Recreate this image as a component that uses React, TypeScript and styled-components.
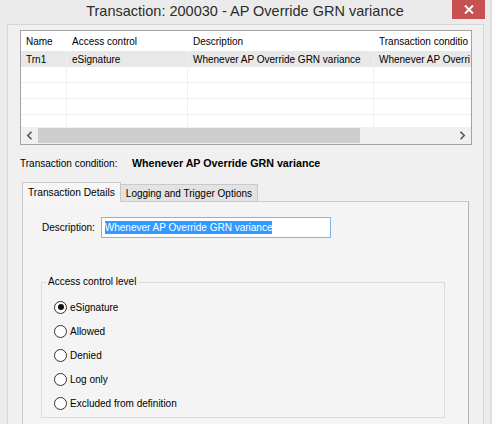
import React, { FC } from 'react';
import styled, { createGlobalStyle } from 'styled-components';

const GlobalStyle = createGlobalStyle`
  html, body {
    margin: 0;
    padding: 0;
    background: #ebebeb;
    overflow: hidden;
  }
  body {
    font-family: "Liberation Sans", Arial, sans-serif;
    font-size: 10px;
    color: #000;
  }
`;

const Window = styled.div`
  width: 492px;
  height: 424px;
  display: flex;
  flex-direction: column;
  background: #ebebeb;
  border-right: 2px solid #e0e0e0;
  box-sizing: border-box;
  overflow: hidden;
`;

const TitleBar = styled.div`
  height: 24px;
  flex: none;
  display: grid;
  grid-template-columns: 1fr auto 1fr;
  align-items: start;
`;

const Title = styled.div`
  grid-column: 2;
  font-size: 14.5px;
  line-height: 23px;
  color: #2b2b2b;
  white-space: nowrap;
`;

const CloseButton = styled.div`
  grid-column: 3;
  justify-self: end;
  margin-right: 5px;
  width: 33px;
  height: 19px;
  background: #c75050;
  display: flex;
  align-items: center;
  justify-content: center;
`;

const ClientArea = styled.div`
  flex: 1;
  margin: 0 6px 0 7px;
  border: 1px solid #d6d6d6;
  border-bottom: none;
  background: #f0f0f0;
  padding: 5px 11px 0 12px;
  display: flex;
  flex-direction: column;
  min-height: 0;
`;

const ListView = styled.div`
  height: 115px;
  box-sizing: border-box;
  border: 1px solid #a3a3a3;
  background: #fff;
  display: flex;
  flex-direction: column;
  overflow: hidden;
`;

const Rows = styled.div`
  flex: 1;
  overflow: hidden;
`;

const Row = styled.div<{ $header?: boolean; $selected?: boolean }>`
  display: grid;
  grid-template-columns: 46px 121px 186px 1fr;
  height: ${({ $header }) => ($header ? '20px' : '16px')};
  background: ${({ $selected }) => ($selected ? '#e8e8e8' : '#fff')};
  border-bottom: ${({ $header, $selected }) => ($header || $selected ? 'none' : '1px solid #f0f0f0')};
  box-sizing: border-box;
`;

const Cell = styled.div<{ $lined?: boolean }>`
  padding-left: 5px;
  display: flex;
  align-items: center;
  white-space: nowrap;
  overflow: hidden;
  border-right: ${({ $lined }) => ($lined ? '1px solid #f0f0f0' : 'none')};
`;

const HScroll = styled.div`
  height: 17px;
  flex: none;
  display: flex;
  background: #e8e8e8;
`;

const ScrollArrow = styled.div`
  width: 17px;
  display: flex;
  align-items: center;
  justify-content: center;
  background: #f0f0f0;
`;

const ScrollTrack = styled.div`
  flex: 1;
  display: flex;
  background: #f0f0f0;
  padding: 1px 0;
`;

const ScrollThumb = styled.div`
  background: #cdcdcd;
`;

const ConditionLine = styled.div`
  margin-top: 12px;
  display: flex;
  align-items: center;
  height: 12px;
`;

const ConditionLabel = styled.span`
  width: 112px;
`;

const ConditionValue = styled.span`
  font-weight: bold;
  font-size: 10.7px;
`;

const TabStrip = styled.div`
  margin-top: 13px;
  margin-left: 2px;
  display: flex;
  align-items: flex-end;
  height: 20px;
  position: relative;
  z-index: 1;
  margin-bottom: -1px;
`;

const Tab = styled.div<{ $active?: boolean }>`
  height: ${({ $active }) => ($active ? '20px' : '18px')};
  box-sizing: border-box;
  padding: 0 5px;
  display: flex;
  align-items: center;
  border: 1px solid #c9c9c9;
  border-bottom: ${({ $active }) => ($active ? 'none' : '1px solid #c9c9c9')};
  border-left: ${({ $active }) => ($active ? '1px solid #c9c9c9' : 'none')};
  background: ${({ $active }) => ($active ? '#f6f6f6' : '#e3e3e3')};
  font-size: ${({ $active }) => ($active ? '10.2px' : '10px')};
`;

const TabPanel = styled.div`
  flex: 1;
  margin-left: 2px;
  margin-right: 3px;
  border: 1px solid #c9c9c9;
  border-right-color: #b4b4b4;
  border-bottom: none;
  background: #f4f4f4;
  padding: 15px 0 0 18px;
`;

const FieldRow = styled.div`
  display: flex;
  align-items: center;
  gap: 6px;
`;

const FieldLabel = styled.span`
  padding-left: 1px;
`;

const TextInput = styled.div`
  width: 230px;
  height: 21px;
  box-sizing: border-box;
  border: 1px solid #7eb4ea;
  background: #fff;
  display: flex;
  align-items: center;
  padding-left: 3px;
`;

const Selection = styled.span`
  background: #3399ff;
  color: #fff;
  line-height: 13px;
`;

const GroupBox = styled.fieldset`
  margin: 38px 0 0 0;
  width: 404px;
  box-sizing: border-box;
  border: 1px solid #dcdcdc;
  padding: 7px 0 2px 12px;
`;

const Legend = styled.legend`
  padding: 0 2px;
  margin-left: -8px;
  line-height: 12px;
`;

const RadioRow = styled.label`
  height: 24px;
  display: flex;
  align-items: center;
  gap: 3px;
`;

const RadioCircle = styled.span<{ $checked?: boolean }>`
  width: 13px;
  height: 13px;
  box-sizing: border-box;
  border-radius: 50%;
  border: 1px solid #333;
  background: #fff;
  display: flex;
  align-items: center;
  justify-content: center;
  &::after {
    content: '';
    width: 6px;
    height: 6px;
    border-radius: 50%;
    background: ${({ $checked }) => ($checked ? '#111' : 'transparent')};
  }
`;

const Chevron: FC<{ dir: 'left' | 'right' }> = ({ dir }) => (
  <svg width="7" height="9" viewBox="0 0 7 9">
    <path
      d={dir === 'left' ? 'M5.5 0.8 L1.8 4.5 L5.5 8.2' : 'M1.5 0.8 L5.2 4.5 L1.5 8.2'}
      fill="none"
      stroke="#555"
      strokeWidth="1.6"
    />
  </svg>
);

const columns = ['Name', 'Access control', 'Description', 'Transaction conditio'];
const record = ['Trn1', 'eSignature', 'Whenever AP Override GRN variance', 'Whenever AP Overri'];
const levels = ['eSignature', 'Allowed', 'Denied', 'Log only', 'Excluded from definition'];

const App: FC = () => (
  <>
    <GlobalStyle />
    <Window>
      <TitleBar>
        <Title>Transaction: 200030 - AP Override GRN variance</Title>
        <CloseButton>
          <svg width="10" height="9" viewBox="0 0 10 9">
            <path d="M1 0.5 L9 8.5 M9 0.5 L1 8.5" stroke="#fff" strokeWidth="2" />
          </svg>
        </CloseButton>
      </TitleBar>
      <ClientArea>
        <ListView>
          <Rows>
            <Row $header>
              {columns.map((c) => (
                <Cell key={c}>{c}</Cell>
              ))}
            </Row>
            <Row $selected>
              {record.map((c, i) => (
                <Cell key={i} $lined={i < 3}>{c}</Cell>
              ))}
            </Row>
            {[0, 1, 2, 3, 4].map((r) => (
              <Row key={r}>
                {columns.map((c, i) => (
                  <Cell key={c} $lined={i < 3} />
                ))}
              </Row>
            ))}
          </Rows>
          <HScroll>
            <ScrollArrow>
              <Chevron dir="left" />
            </ScrollArrow>
            <ScrollTrack>
              <ScrollThumb style={{ width: '77.5%' }} />
            </ScrollTrack>
            <ScrollArrow>
              <Chevron dir="right" />
            </ScrollArrow>
          </HScroll>
        </ListView>

        <ConditionLine>
          <ConditionLabel>Transaction condition:</ConditionLabel>
          <ConditionValue>Whenever AP Override GRN variance</ConditionValue>
        </ConditionLine>

        <TabStrip>
          <Tab $active>Transaction Details</Tab>
          <Tab>Logging and Trigger Options</Tab>
        </TabStrip>
        <TabPanel>
          <FieldRow>
            <FieldLabel>Description:</FieldLabel>
            <TextInput>
              <Selection>Whenever AP Override GRN variance</Selection>
            </TextInput>
          </FieldRow>
          <GroupBox>
            <Legend>Access control level</Legend>
            {levels.map((l, i) => (
              <RadioRow key={l}>
                <RadioCircle $checked={i === 0} />
                {l}
              </RadioRow>
            ))}
          </GroupBox>
        </TabPanel>
      </ClientArea>
    </Window>
  </>
);

export default App;
